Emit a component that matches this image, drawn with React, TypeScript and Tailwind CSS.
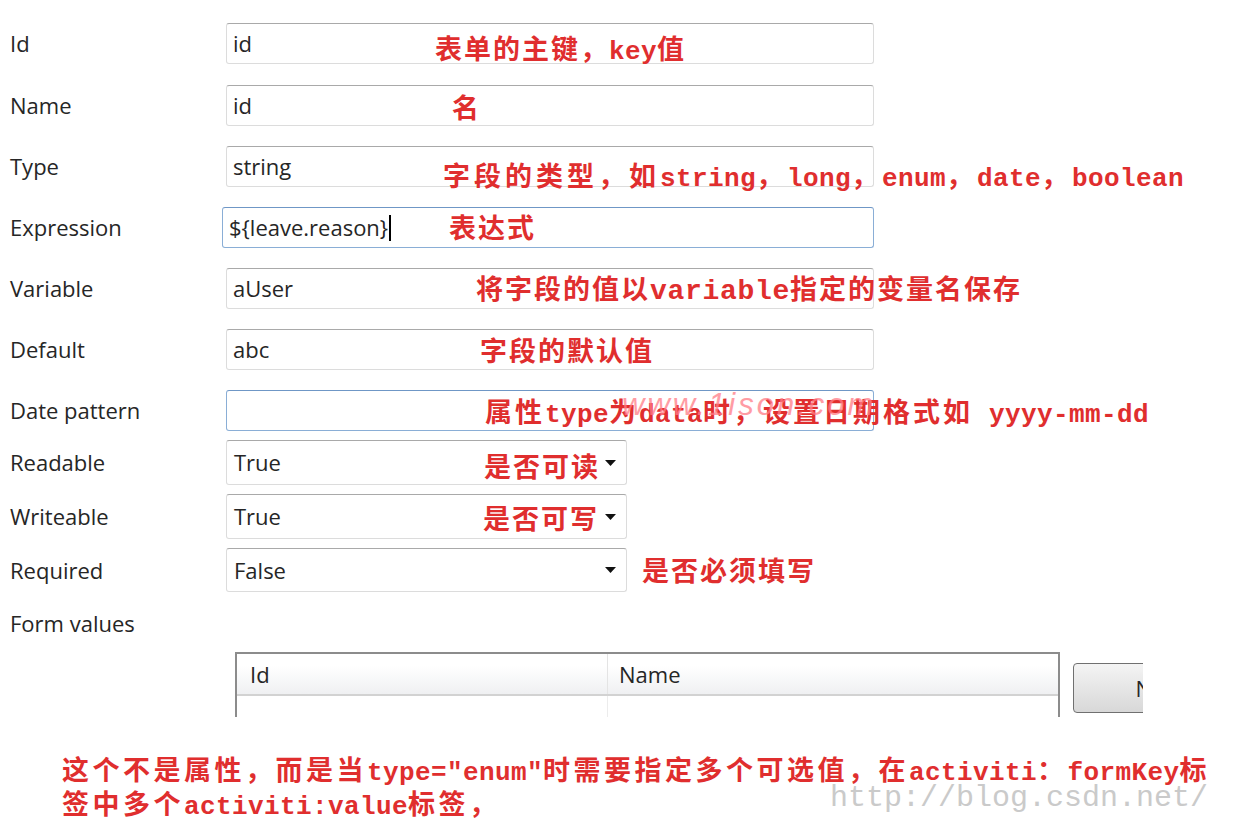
import React from 'react'

const MONO = "font-['Liberation_Mono','DejaVu_Sans_Mono',monospace]"
const CJK = "font-['Noto_Sans_CJK_SC',sans-serif]"

// red annotation text: CJK runs and latin runs get their own font
function Note({
  text,
  className = '',
  cjk = 'text-[27px] tracking-[2px]',
  mono = 'text-[26px] tracking-[0.4px]',
}: {
  text: string
  className?: string
  cjk?: string
  mono?: string
}) {
  const runs = text.match(/[\x20-\x7e\u2033]+|[^\x20-\x7e\u2033]+/g) ?? []
  return (
    <div className={`whitespace-pre leading-[30px] font-bold text-[#e02e2e] ${className}`}>
      {runs.map((r, i) =>
        /^[\x20-\x7e\u2033]/.test(r) ? (
          <span key={i} className={`${MONO} ${mono}`}>
            {r}
          </span>
        ) : (
          <span key={i} className={`${CJK} ${cjk}`}>
            {r}
          </span>
        )
      )}
    </div>
  )
}

function TextBox({ value, focus = false, cursor = false }: { value?: string; focus?: boolean; cursor?: boolean }) {
  return (
    <div
      className={`h-full flex items-center rounded-[3px] border bg-white px-[6px] ${
        focus ? 'border-[#8aaed6] border-t-[#6f97c6]' : 'border-[#dcdcdc] border-t-[#a9a9a9]'
      }`}
    >
      {value}
      {cursor && <span className="ml-[1px] w-[2px] h-[26px] bg-black" />}
    </div>
  )
}

function Select({ value }: { value: string }) {
  return (
    <div className="relative w-[401px] h-full flex items-center rounded-[3px] border border-[#dcdcdc] border-t-[#a9a9a9] bg-white px-[7px]">
      {value}
      <svg className="absolute left-[378px] top-1/2 -translate-y-1/2" width="11" height="6" viewBox="0 0 11 6">
        <path d="M0 0h11L5.5 6z" fill="#111" />
      </svg>
    </div>
  )
}

export default function App() {
  return (
    <div className="relative w-[1236px] h-[824px] overflow-hidden bg-white font-['Open_Sans',sans-serif] text-[22px] text-[#262626]">
      <div className="pt-[23px]">
        {/* Id */}
        <div className="relative flex items-center h-[41px] mb-[21px]">
          <div className="w-[226px] pl-[10px]">Id</div>
          <div className="w-[648px] h-full">
            <TextBox value="id" />
          </div>
          <Note text="表单的主键，key值" className="absolute left-[435px] top-[10px]" />
        </div>

        {/* Name */}
        <div className="relative flex items-center h-[41px] mb-[20px]">
          <div className="w-[226px] pl-[10px]">Name</div>
          <div className="w-[648px] h-full">
            <TextBox value="id" />
          </div>
          <Note text="名" className="absolute left-[452px] top-[7px]" />
        </div>

        {/* Type */}
        <div className="relative flex items-center h-[41px] mb-[20px]">
          <div className="w-[226px] pl-[10px]">Type</div>
          <div className="w-[648px] h-full">
            <TextBox value="string" />
          </div>
          <Note
            text="字段的类型，如string，long，enum，date，boolean"
            className="absolute left-[443px] top-[14px]"
            cjk="text-[27px] tracking-[4px]"
          />
        </div>

        {/* Expression */}
        <div className="relative flex items-center h-[41px] mb-[20px]">
          <div className="w-[222px] pl-[10px]">Expression</div>
          <div className="w-[652px] h-full">
            <TextBox value="${leave.reason}" focus cursor />
          </div>
          <Note text="表达式" className="absolute left-[449px] top-[5px]" />
        </div>

        {/* Variable */}
        <div className="relative flex items-center h-[41px] mb-[20px]">
          <div className="w-[226px] pl-[10px]">Variable</div>
          <div className="w-[648px] h-full">
            <TextBox value="aUser" />
          </div>
          <Note
            text="将字段的值以variable指定的变量名保存"
            className="absolute left-[476px] top-[5px]"
            mono="text-[28px] tracking-[0.7px]"
          />
        </div>

        {/* Default */}
        <div className="relative flex items-center h-[41px] mb-[20px]">
          <div className="w-[226px] pl-[10px]">Default</div>
          <div className="w-[648px] h-full">
            <TextBox value="abc" />
          </div>
          <Note text="字段的默认值" className="absolute left-[480px] top-[6px]" />
        </div>

        {/* Date pattern */}
        <div className="relative flex items-center h-[41px] mb-[9px]">
          <div className="w-[226px] pl-[10px]">Date pattern</div>
          <div className="w-[648px] h-full">
            <TextBox focus />
          </div>
          <Note
            text="属性type为data时，设置日期格式如 yyyy-mm-dd"
            className="absolute left-[485px] top-[6px]"
            cjk="text-[27px] tracking-[3px]"
          />
          {/* site watermark over the screenshot */}
          <div className="absolute left-[622px] top-[-8px] italic text-[31px] tracking-[3px] font-['Liberation_Sans',sans-serif] text-[#ff7b86]/75">
            www.1ison.com
          </div>
        </div>

        {/* Readable */}
        <div className="relative flex items-center h-[45px] mb-[9px]">
          <div className="w-[226px] pl-[10px]">Readable</div>
          <Select value="True" />
          <Note text="是否可读" className="absolute left-[484px] top-[11px]" />
        </div>

        {/* Writeable */}
        <div className="relative flex items-center h-[45px] mb-[9px]">
          <div className="w-[226px] pl-[10px]">Writeable</div>
          <Select value="True" />
          <Note text="是否可写" className="absolute left-[483px] top-[9px]" />
        </div>

        {/* Required */}
        <div className="relative flex items-center h-[44px]">
          <div className="w-[226px] pl-[10px]">Required</div>
          <Select value="False" />
          <Note text="是否必须填写" className="absolute left-[642px] top-[7px]" />
        </div>

        {/* Form values */}
        <div className="mt-[16px] h-[30px] leading-[30px] pl-[10px]">Form values</div>

        <div className="flex mt-[14px] pl-[235px]">
          <div className="w-[825px] h-[65px] border-t-2 border-x-2 border-[#8c8c8c] bg-white">
            <div className="flex h-[42px] border-b-2 border-[#d2d2d2] bg-linear-to-b from-white from-30% to-[#eff0f2]">
              <div className="w-[371px] pl-[13px] flex items-center border-r border-[#e4e4e4]">Id</div>
              <div className="flex-1 pl-[11px] flex items-center">Name</div>
            </div>
            <div className="flex h-[21px]">
              <div className="w-[371px] border-r border-[#ececec]" />
            </div>
          </div>
          <div className="ml-[13px] mt-[11px] w-[70px] h-[50px] overflow-hidden">
            <div className="w-[171px] h-full rounded-[4px] border border-[#707070] bg-linear-to-b from-[#f4f4f4] to-[#d8d8d8] flex items-center justify-center">
              New
            </div>
          </div>
        </div>

        <div className="mt-[37px] pl-[62px]">
          <Note
            text="这个不是属性，而是当type=″enum″时需要指定多个可选值，在activiti：formKey标"
            cjk="text-[27px] tracking-[3.5px]"
          />
          <Note text="签中多个activiti:value标签，" cjk="text-[27px] tracking-[3.5px]" />
        </div>
      </div>

      <div className={`absolute left-[830px] top-[780px] text-[30px] leading-[36px] text-[#cacaca] ${MONO}`}>
        http://blog.csdn.net/
      </div>
    </div>
  )
}
